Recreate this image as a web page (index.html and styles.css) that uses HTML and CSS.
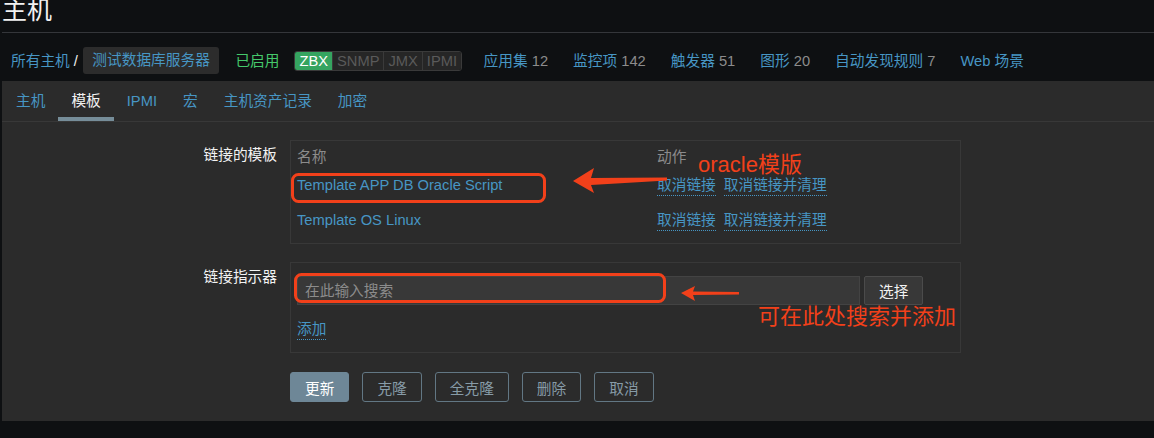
FILE: index.html
```html
<!DOCTYPE html>
<html lang="zh-CN">
<head>
<meta charset="utf-8">
<title>主机</title>
<link rel="stylesheet" href="styles.css">
</head>
<body>
<div class="page">
  <header class="top">
    <h1 class="title">主机</h1>
  </header>
  <nav class="crumbs">
    <a class="link">所有主机</a>
    <span class="sep">/</span>
    <span class="crumb-current">测试数据库服务器</span>
    <span class="status-on">已启用</span>
    <span class="badges"><span class="badge on">ZBX</span><span class="badge">SNMP</span><span class="badge">JMX</span><span class="badge">IPMI</span></span>
    <ul class="counts">
      <li><a class="link">应用集</a> <span class="num">12</span></li>
      <li><a class="link">监控项</a> <span class="num">142</span></li>
      <li><a class="link">触发器</a> <span class="num">51</span></li>
      <li><a class="link">图形</a> <span class="num">20</span></li>
      <li><a class="link">自动发现规则</a> <span class="num">7</span></li>
      <li><a class="link">Web 场景</a></li>
    </ul>
  </nav>
  <main class="panel">
    <div class="tabs">
      <a class="tab">主机</a>
      <a class="tab active">模板</a>
      <a class="tab">IPMI</a>
      <a class="tab">宏</a>
      <a class="tab">主机资产记录</a>
      <a class="tab">加密</a>
    </div>
    <form class="form">
      <div class="label">链接的模板</div>
      <div class="box tpl">
        <div class="tpl-head"><span>名称</span><span>动作</span></div>
        <div class="tpl-row">
          <a class="link">Template APP DB Oracle Script</a>
          <span class="actions"><a class="dotted">取消链接</a><a class="dotted">取消链接并清理</a></span>
        </div>
        <div class="tpl-row">
          <a class="link">Template OS Linux</a>
          <span class="actions"><a class="dotted">取消链接</a><a class="dotted">取消链接并清理</a></span>
        </div>
      </div>
      <div class="label">链接指示器</div>
      <div class="box linker">
        <div class="ms">
          <input class="ms-input" type="text" placeholder="在此输入搜索">
          <button class="btn-select" type="button">选择</button>
        </div>
        <a class="dotted add">添加</a>
      </div>
      <div class="buttons">
        <button class="btn primary" type="button">更新</button>
        <button class="btn" type="button">克隆</button>
        <button class="btn" type="button">全克隆</button>
        <button class="btn" type="button">删除</button>
        <button class="btn" type="button">取消</button>
      </div>
    </form>
  </main>
  <div class="annot">
    <svg class="annot-svg" width="1154" height="438" viewBox="0 0 1154 438">
      <rect x="292.5" y="174.5" width="252" height="27" rx="6" ry="6" fill="none" stroke="#f2401a" stroke-width="3"/>
      <rect x="295.5" y="274.5" width="369" height="27" rx="6" ry="6" fill="none" stroke="#f2401a" stroke-width="3"/>
      <polygon points="573,181 594,168 591,178 667,177.5 667,180.5 591,185 594,193" fill="#f2401a"/>
      <polygon points="681,293 695,286 693,291.5 739,292 739,294.5 693,295 695,301" fill="#f2401a"/>
    </svg>
    <span class="note note-oracle">oracle模版</span>
    <span class="note note-search">可在此处搜索并添加</span>
  </div>
</div>
</body>
</html>
```

FILE: styles.css
```css
* {
  box-sizing: border-box;
}

body {
  margin: 0;
  background: #0e1012;
  font-family: "Liberation Sans", "Noto Sans CJK SC", sans-serif;
  font-size: 14.7px;
  color: #f2f2f2;
}

.page {
  position: relative;
  width: 1154px;
  height: 438px;
  overflow: hidden;
}

.top {
  height: 33px;
  margin-left: 2px;
  border-bottom: 1px solid #34363a;
  overflow: hidden;
}

.title {
  margin: -2px 0 0 0;
  font-size: 25px;
  line-height: 25px;
  font-weight: normal;
  color: #f2f2f2;
}

.crumbs {
  display: flex;
  align-items: center;
  height: 48px;
  padding: 7px 0 0 11px;
}

.link {
  color: #4796c4;
  text-decoration: none;
  line-height: 18px;
}

.sep {
  margin: 0 5px 0 4px;
  color: #f2f2f2;
  line-height: 18px;
}

.crumb-current {
  background: #2c2c2c;
  color: #4796c4;
  padding: 0 9.5px;
  height: 27px;
  line-height: 27px;
  border-radius: 3px;
}

.status-on {
  color: #45c96b;
  margin-left: 16px;
  line-height: 18px;
}

.badges {
  display: flex;
  margin-left: 15px;
  border: 1px solid #3a3a3a;
  border-radius: 3px;
  overflow: hidden;
}

.badge {
  padding: 0 4px;
  line-height: 18px;
  color: #5a5a5a;
  background: #262626;
}

.badge + .badge {
  border-left: 1px solid #3a3a3a;
}

.badge.on {
  background: #35a460;
  color: #ffffff;
}

.counts {
  display: flex;
  gap: 25px;
  margin: 0 0 0 21.5px;
  padding: 0;
  list-style: none;
  line-height: 18px;
}

.num {
  color: #8c8c8c;
}

.panel {
  display: block;
  margin-left: 2px;
  background: #2b2b2b;
}

.tabs {
  display: flex;
  height: 41px;
  padding-left: 1px;
  border-bottom: 1px solid #383838;
}

.tab {
  padding: 0 13px;
  height: 40px;
  line-height: 40px;
  color: #4796c4;
}

.tab.active {
  color: #f2f2f2;
  box-shadow: inset 0 -4px 0 #768d99;
}

.form {
  display: grid;
  grid-template-columns: 275px 671px;
  column-gap: 13px;
  row-gap: 18px;
  padding: 18px 0 19px;
  margin: 0;
}

.label {
  text-align: right;
  padding-top: 6px;
  line-height: 18px;
  color: #f2f2f2;
}

.box {
  border: 1px solid #383838;
  padding: 6px;
}

.tpl-head,
.tpl-row {
  display: grid;
  grid-template-columns: 360px auto;
}

.tpl-head {
  height: 20px;
  line-height: 20px;
  color: #8c8c8c;
}

.tpl-row {
  height: 35px;
  align-items: center;
}

.actions {
  display: flex;
  gap: 8px;
  padding-top: 2px;
}

.dotted {
  color: #4796c4;
  line-height: 18px;
  padding-bottom: 1px;
  border-bottom: 1px dotted #4796c4;
}

.linker {
  display: flex;
  flex-direction: column;
  align-items: flex-start;
  padding: 13px 6px 12px;
}

.ms {
  display: flex;
  gap: 4px;
}

.ms-input {
  width: 563px;
  height: 29px;
  margin: 0;
  padding: 0 7px;
  background: #383838;
  border: 1px solid #434343;
  border-radius: 0;
  color: #f2f2f2;
  font-family: inherit;
  font-size: 14.7px;
  outline: none;
}

.ms-input::placeholder {
  color: #8c8c8c;
}

.btn-select {
  height: 29px;
  margin: 0;
  padding: 0 14px;
  background: #383838;
  border: 1px solid #4b4b4b;
  border-radius: 2px;
  color: #f2f2f2;
  font-family: inherit;
  font-size: 14.7px;
}

.add {
  margin-top: 15px;
}

.buttons {
  grid-column: 2;
  display: flex;
  gap: 13px;
  margin-top: 1px;
}

.btn {
  height: 30px;
  margin: 0;
  padding: 0 14px;
  border: 1px solid #627784;
  border-radius: 3px;
  background: transparent;
  color: #879ba7;
  font-family: inherit;
  font-size: 14.7px;
}

.btn.primary {
  background: #6e8797;
  border-color: #6e8797;
  color: #ffffff;
}

.annot {
  position: absolute;
  inset: 0;
  pointer-events: none;
}

.annot-svg {
  position: absolute;
  left: 0;
  top: 0;
}

.note {
  position: absolute;
  color: #f2401a;
  font-size: 22px;
  line-height: 26px;
  white-space: nowrap;
}

.note-oracle {
  left: 698px;
  top: 152px;
}

.note-search {
  left: 758px;
  top: 304px;
}
```
